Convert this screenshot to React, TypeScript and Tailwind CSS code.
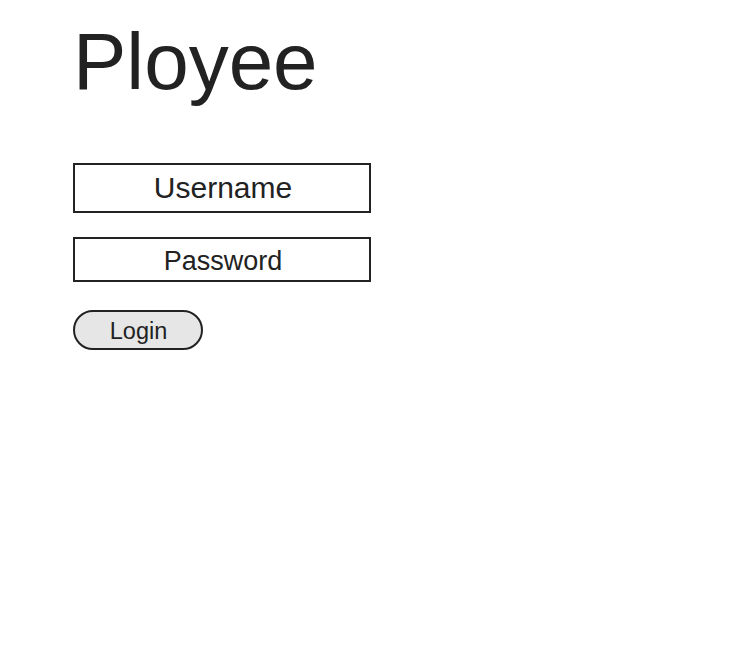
import React from "react";

export default function App() {
  return (
    <div
      className="min-h-[670px] w-[750px] bg-white pl-[73px] text-[#222222]"
      style={{ fontFamily: '"Liberation Sans", Arial, sans-serif' }}
    >
      <h1 className="pt-[16px] text-[80px] leading-[92px] font-normal">Ployee</h1>
      <div className="mt-[55px] flex flex-col items-start">
        <div className="flex h-[50px] w-[298px] items-center justify-center border-2 border-[#222222] pl-[2px] text-[30px] leading-none">
          Username
        </div>
        <div className="mt-[24px] flex h-[45px] w-[298px] items-center justify-center border-2 border-[#222222] pl-[2px] pt-[3px] text-[27px] leading-none">
          Password
        </div>
        <button className="mt-[28px] flex h-[40px] w-[130px] items-center justify-center rounded-full border-2 border-[#222222] bg-[#e6e6e6] pl-[1px] pt-[3px] text-[23.5px] leading-none text-[#222222]">
          Login
        </button>
      </div>
    </div>
  );
}
